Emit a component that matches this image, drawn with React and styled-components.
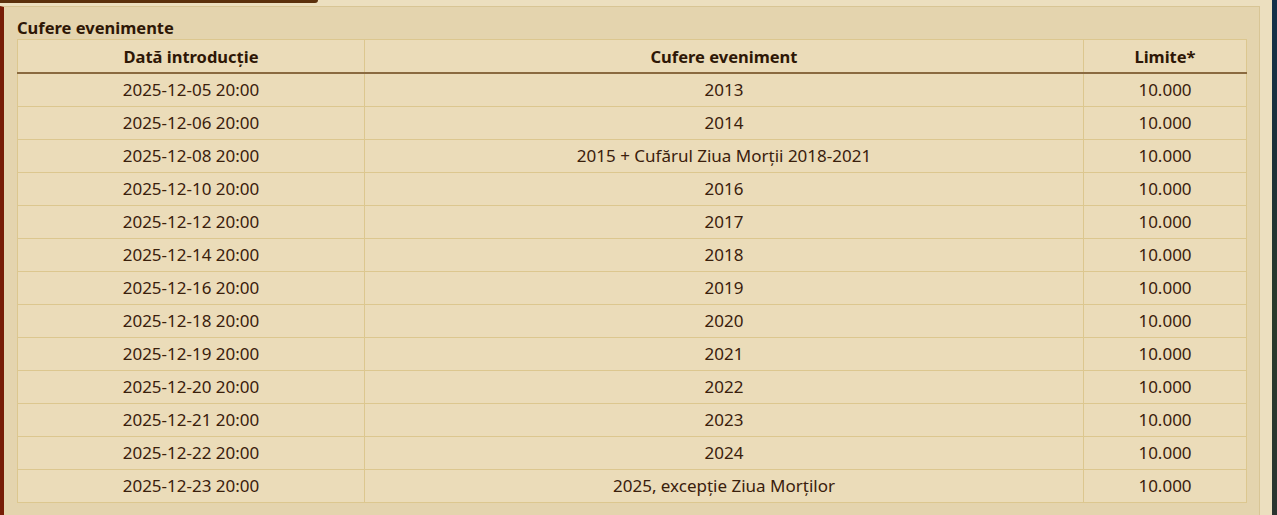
import React from "react";
import styled, { createGlobalStyle } from "styled-components";

const Global = createGlobalStyle`
  html, body { margin: 0; padding: 0; }
  body { font-family: "Noto Sans", "Open Sans", sans-serif; background: #ecdfbf; }
`;

const Page = styled.div`
  width: 1277px;
  height: 515px;
  display: flex;
  background: #ecdfbf;
  overflow: hidden;
`;

const Main = styled.div`
  flex: 1;
  display: flex;
  flex-direction: column;
`;

const TopBar = styled.div`
  width: 318px;
  height: 3px;
  background: #5b300c;
  border-bottom-right-radius: 3px;
`;

const Body = styled.div`
  flex: 1;
  display: flex;
  margin-top: 3px;
`;

const Panel = styled.section`
  width: 1260px;
  background: #e4d4ae;
  border-left: 4px solid #771d06;
  border-top: 1px solid #d8c595;
  border-right: 1px solid #d8c595;
  padding: 10px 13px 0 13px;
  box-sizing: border-box;
`;

const RightStrip = styled.div`
  width: 12px;
  background: #ecdfbf;
`;

const DarkEdge = styled.div`
  width: 5px;
  background: linear-gradient(#13304a 0%, #1c3038 30%, #2a3a2a 60%, #2a3530 100%);
`;

const Title = styled.h2`
  margin: 0;
  font-size: 16.5px;
  line-height: 22px;
  font-weight: 700;
  color: #2e1706;
`;

const Table = styled.table`
  width: 1229px;
  border-collapse: collapse;
  table-layout: fixed;
  background: #ebdcb9;
  color: #3a200c;
  font-size: 17px;
`;

const Th = styled.th`
  height: 32px;
  padding: 0;
  font-size: 16.5px;
  font-weight: 700;
  color: #2e1706;
  border: 1px solid #dcc78f;
  border-bottom: 2px solid #8a6a40;
  text-align: center;
`;

const Td = styled.td`
  height: 32px;
  padding: 0;
  border: 1px solid #dcc78f;
  text-align: center;
  line-height: 20px;
`;

const rows = [
  ["2025-12-05 20:00", "2013"],
  ["2025-12-06 20:00", "2014"],
  ["2025-12-08 20:00", "2015 + Cufărul Ziua Morții 2018-2021"],
  ["2025-12-10 20:00", "2016"],
  ["2025-12-12 20:00", "2017"],
  ["2025-12-14 20:00", "2018"],
  ["2025-12-16 20:00", "2019"],
  ["2025-12-18 20:00", "2020"],
  ["2025-12-19 20:00", "2021"],
  ["2025-12-20 20:00", "2022"],
  ["2025-12-21 20:00", "2023"],
  ["2025-12-22 20:00", "2024"],
  ["2025-12-23 20:00", "2025, excepție Ziua Morților"],
];

export default function App() {
  return (
    <>
      <Global />
      <Page>
        <Main>
          <TopBar />
          <Body>
            <Panel>
              <Title>Cufere evenimente</Title>
              <Table>
                <colgroup>
                  <col style={{ width: 347 }} />
                  <col style={{ width: 719 }} />
                  <col style={{ width: 163 }} />
                </colgroup>
                <thead>
                  <tr>
                    <Th>Dată introducție</Th>
                    <Th>Cufere eveniment</Th>
                    <Th>Limite*</Th>
                  </tr>
                </thead>
                <tbody>
                  {rows.map(([d, c]) => (
                    <tr key={d}>
                      <Td>{d}</Td>
                      <Td>{c}</Td>
                      <Td>10.000</Td>
                    </tr>
                  ))}
                </tbody>
              </Table>
            </Panel>
            <RightStrip />
          </Body>
        </Main>
        <DarkEdge />
      </Page>
    </>
  );
}
